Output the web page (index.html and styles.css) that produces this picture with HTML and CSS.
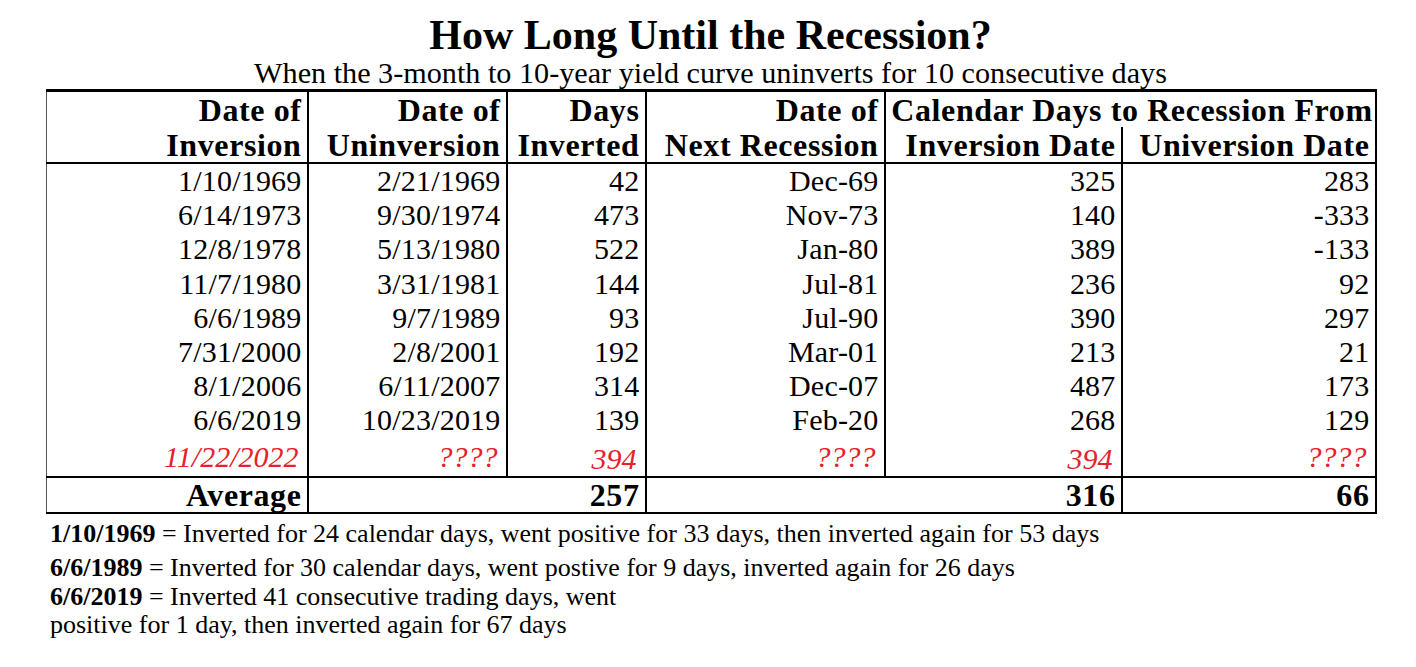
FILE: index.html
```html
<!DOCTYPE html>
<html lang="en">
<head>
<meta charset="utf-8">
<title>How Long Until the Recession?</title>
<link rel="stylesheet" href="styles.css">
</head>
<body>
<div class="page">
  <h1 class="title">How Long Until the Recession?</h1>
  <p class="subtitle">When the 3-month to 10-year yield curve uninverts for 10 consecutive days</p>
  <table class="grid">
    <colgroup>
      <col class="c1"><col class="c2"><col class="c3"><col class="c4"><col class="c5"><col class="c6">
    </colgroup>
    <thead>
      <tr class="h1row">
        <th>Date of</th>
        <th>Date of</th>
        <th>Days</th>
        <th>Date of</th>
        <th colspan="2" class="span">Calendar Days to Recession From</th>
      </tr>
      <tr class="h2row">
        <th>Inversion</th>
        <th>Uninversion</th>
        <th>Inverted</th>
        <th>Next Recession</th>
        <th>Inversion Date</th>
        <th>Universion Date</th>
      </tr>
    </thead>
    <tbody>
      <tr><td>1/10/1969</td><td>2/21/1969</td><td>42</td><td>Dec-69</td><td>325</td><td>283</td></tr>
      <tr><td>6/14/1973</td><td>9/30/1974</td><td>473</td><td>Nov-73</td><td>140</td><td>-333</td></tr>
      <tr><td>12/8/1978</td><td>5/13/1980</td><td>522</td><td>Jan-80</td><td>389</td><td>-133</td></tr>
      <tr><td>11/7/1980</td><td>3/31/1981</td><td>144</td><td>Jul-81</td><td>236</td><td>92</td></tr>
      <tr><td>6/6/1989</td><td>9/7/1989</td><td>93</td><td>Jul-90</td><td>390</td><td>297</td></tr>
      <tr><td>7/31/2000</td><td>2/8/2001</td><td>192</td><td>Mar-01</td><td>213</td><td>21</td></tr>
      <tr><td>8/1/2006</td><td>6/11/2007</td><td>314</td><td>Dec-07</td><td>487</td><td>173</td></tr>
      <tr><td>6/6/2019</td><td>10/23/2019</td><td>139</td><td>Feb-20</td><td>268</td><td>129</td></tr>
      <tr class="current"><td>11/22/2022</td><td>????</td><td class="low">394</td><td>????</td><td class="low">394</td><td>????</td></tr>
    </tbody>
    <tfoot>
      <tr class="avg"><td>Average</td><td colspan="2">257</td><td colspan="2">316</td><td>66</td></tr>
    </tfoot>
  </table>
  <div class="notes">
    <p class="note first"><b>1/10/1969</b> = Inverted for 24 calendar days, went positive for 33 days, then inverted again for 53 days</p>
    <p class="note"><b>6/6/1989</b> = Inverted for 30 calendar days, went postive for 9 days, inverted again for 26 days</p>
    <p class="note"><b>6/6/2019</b> = Inverted 41 consecutive trading days, went</p>
    <p class="note">positive for 1 day, then inverted again for 67 days</p>
  </div>
</div>
</body>
</html>
```

FILE: styles.css
```css
html, body {
  margin: 0;
  padding: 0;
  background: #ffffff;
}

body {
  font-family: "Liberation Serif", "Times New Roman", serif;
  color: #000000;
}

.page {
  width: 1416px;
  height: 667px;
  padding: 12px 0 0 46px;
  box-sizing: border-box;
}

.title {
  margin: 0;
  width: 1329px;
  text-align: center;
  font-size: 42px;
  line-height: 46px;
  font-weight: bold;
}

.subtitle {
  margin: 0;
  width: 1329px;
  text-align: center;
  font-size: 30.2px;
  line-height: 31px;
}

.grid {
  border-collapse: collapse;
  table-layout: fixed;
  width: 1329px;
  border-top: 3px solid #000;
  border-right: 2px solid #000;
  border-bottom: 2px solid #000;
  border-left: 1px solid #555;
}

.c1 { width: 261px; }
.c2 { width: 199px; }
.c3 { width: 139px; }
.c4 { width: 239px; }
.c5 { width: 237px; }
.c6 { width: 254px; }

.grid th,
.grid td {
  padding: 0 5px 0 0;
  text-align: right;
  white-space: nowrap;
  border-right: 2px solid #000;
  vertical-align: middle;
}

.grid th {
  font-size: 32px;
  font-weight: bold;
  letter-spacing: 0.6px;
  height: 35px;
  line-height: 34px;
}

.grid .span {
  text-align: center;
  padding: 0 0 0 4px;
}

.h2row th {
  border-bottom: 2px solid #000;
}

.grid td {
  font-size: 30px;
  letter-spacing: 0.2px;
  height: 34.2px;
  line-height: 34px;
}

.current td {
  color: #e8202a;
  font-style: italic;
  padding-right: 8px;
  letter-spacing: 0;
}

.current td.low {
  padding-top: 4px;
  line-height: 30px;
}

.avg td {
  border-top: 2px solid #000;
  font-weight: bold;
  font-size: 32px;
  letter-spacing: 0.6px;
  height: 34px;
}

.notes {
  padding: 6px 0 0 4px;
}

.note {
  margin: 0;
  font-size: 26px;
  line-height: 28.5px;
}

.note.first {
  margin-bottom: 6px;
}
```
